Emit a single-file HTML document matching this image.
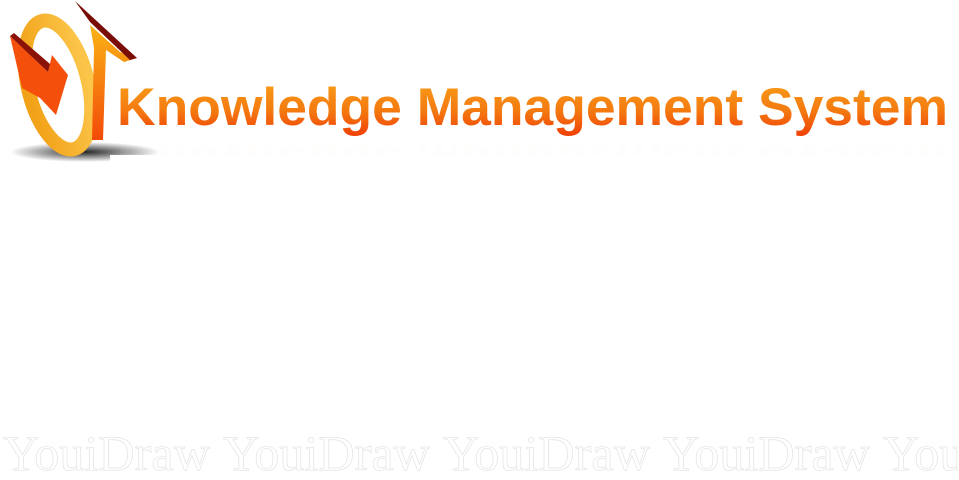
<!DOCTYPE html>
<html><head><meta charset="utf-8"><style>
html,body{margin:0;padding:0;background:#fff;width:959px;height:480px;overflow:hidden}
</style></head><body>
<svg width="959" height="480" viewBox="0 0 959 480" xmlns="http://www.w3.org/2000/svg">
<defs>
<linearGradient id="tg" x1="0" y1="0" x2="0" y2="1">
<stop offset="0" stop-color="#f9a21a"/><stop offset="0.55" stop-color="#f47a10"/><stop offset="1" stop-color="#ef3d06"/>
</linearGradient>
<linearGradient id="rg" x1="0" y1="0" x2="1" y2="0">
<stop offset="0" stop-color="#f2a218"/><stop offset="1" stop-color="#fbc54a"/>
</linearGradient>
<linearGradient id="ig" x1="0" y1="0" x2="0" y2="1">
<stop offset="0" stop-color="#fbb416"/><stop offset="1" stop-color="#f24a08"/>
</linearGradient>
<radialGradient id="sh" cx="0.5" cy="0.5" r="0.5">
<stop offset="0" stop-color="#000" stop-opacity="0.85"/><stop offset="1" stop-color="#000" stop-opacity="0"/>
</radialGradient>
<linearGradient id="rf" x1="0" y1="0" x2="0" y2="1">
<stop offset="0" stop-color="#f7a060" stop-opacity="0.35"/><stop offset="1" stop-color="#fff" stop-opacity="0"/>
</linearGradient>
</defs>
<ellipse cx="85" cy="152" rx="75" ry="10" fill="url(#sh)"/>
<ellipse cx="58" cy="85" rx="30" ry="66" transform="rotate(-14 58 85)" fill="none" stroke="url(#rg)" stroke-width="14"/>
<path d="M90 25 L120 52 L137 58 L124 62 L106 50 L103 140 L92 140 L94 48 Z" fill="url(#ig)"/>
<path d="M75 1 L137 58 L130 60 L90 22 Z" fill="#7a0c08"/>
<path d="M10 36 L48 72 L52 55 L68 75 L56 115 L40 98 L22 88 Z" fill="#f4500c"/>
<path d="M10 36 L14 33 L50 64 L48 72 Z" fill="#8a1208"/>
<text x="117" y="125" font-family="Liberation Sans, sans-serif" font-weight="bold" font-size="53" fill="url(#tg)" textLength="831" lengthAdjust="spacingAndGlyphs">Knowledge Management System</text>
<text x="117" y="138" font-family="Liberation Sans, sans-serif" font-weight="bold" font-size="53" fill="url(#rf)" textLength="831" lengthAdjust="spacingAndGlyphs" transform="translate(0,283) scale(1,-1)" opacity="0.5">Knowledge Management System</text>
<rect x="110" y="155" width="849" height="60" fill="#fff"/>
<g font-family="Liberation Serif, serif" font-size="50" fill="none" stroke="#e6e6e6" stroke-width="0.8">
<text x="3" y="470" textLength="207" lengthAdjust="spacingAndGlyphs">YouiDraw</text>
<text x="223" y="470" textLength="207" lengthAdjust="spacingAndGlyphs">YouiDraw</text>
<text x="443" y="470" textLength="207" lengthAdjust="spacingAndGlyphs">YouiDraw</text>
<text x="663" y="470" textLength="207" lengthAdjust="spacingAndGlyphs">YouiDraw</text>
<text x="883" y="470" textLength="207" lengthAdjust="spacingAndGlyphs">YouiDraw</text>
</g>
</svg>
</body></html>
